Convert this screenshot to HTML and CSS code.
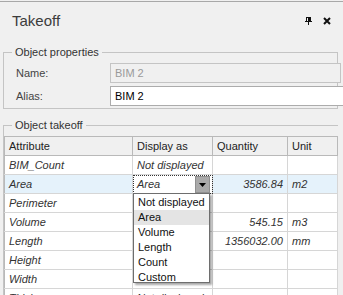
FILE: index.html
```html
<!DOCTYPE html>
<html>
<head>
<meta charset="utf-8">
<link rel="stylesheet" href="styles.css">
</head>
<body>
<div class="panel">
  <div class="titlebar">
    <span class="title">Takeoff</span>
    <span class="tools">
      <svg class="pin" width="7" height="8" viewBox="0 0 7 8"><path d="M1 0h5v4h1v1h-3v3h-1v-3h-3v-1h1z" fill="#111"/><rect x="2" y="1" width="1" height="3" fill="#f0f0f0"/></svg>
      <svg class="close" width="8" height="8" viewBox="0 0 8 8"><path d="M1 1L7 7M7 1L1 7" stroke="#111" stroke-width="2"/></svg>
    </span>
  </div>
  <fieldset class="group props">
    <legend>Object properties</legend>
    <div class="field"><label>Name:</label><div class="input disabled">BIM 2</div></div>
    <div class="field"><label>Alias:</label><div class="input wide">BIM 2</div></div>
  </fieldset>
  <fieldset class="group takeoff">
    <legend>Object takeoff</legend>
    <div class="gridwrap">
      <table class="grid">
        <colgroup><col class="c1"><col class="c2"><col class="c3"><col class="c4"></colgroup>
        <thead><tr><th>Attribute</th><th>Display as</th><th>Quantity</th><th>Unit</th></tr></thead>
        <tbody>
          <tr><td>BIM_Count</td><td>Not displayed</td><td></td><td></td></tr>
          <tr class="sel"><td>Area</td><td class="editor"><span>Area</span><span class="btn"><svg width="7" height="4" viewBox="0 0 7 4"><path d="M0 0h7L3.5 4z" fill="#000"/></svg></span></td><td class="num">3586.84</td><td>m2</td></tr>
          <tr><td>Perimeter</td><td></td><td></td><td></td></tr>
          <tr><td>Volume</td><td></td><td class="num">545.15</td><td>m3</td></tr>
          <tr><td>Length</td><td></td><td class="num">1356032.00</td><td>mm</td></tr>
          <tr><td>Height</td><td></td><td></td><td></td></tr>
          <tr><td>Width</td><td></td><td></td><td></td></tr>
          <tr><td>Thickness</td><td>Not displayed</td><td></td><td></td></tr>
        </tbody>
      </table>
      <ul class="dropdown">
        <li>Not displayed</li>
        <li class="hot">Area</li>
        <li>Volume</li>
        <li>Length</li>
        <li>Count</li>
        <li>Custom</li>
      </ul>
    </div>
  </fieldset>
</div>
</body>
</html>
```
FILE: styles.css
```css
html, body {
  margin: 0;
  padding: 0;
  background: #f0f0f0;
  overflow: hidden;
  width: 343px;
  height: 295px;
}
body {
  font-family: "Liberation Sans", Arial, sans-serif;
  font-size: 11px;
  color: #000;
}
.panel {
  margin-top: 1px;
  border-top: 1px solid #a8a8a8;
  height: 293px;
  overflow: hidden;
}
.titlebar {
  display: flex;
  align-items: center;
  justify-content: space-between;
  height: 36px;
  padding: 0 12px 0 12px;
}
.title {
  font-size: 15px;
  color: #3c3c3c;
}
.tools {
  display: flex;
  align-items: center;
  gap: 11px;
  padding-top: 2px;
}
.group {
  margin: 0 5px 0 3px;
  padding: 0;
  border: 1px solid #c4c4c4;
  min-width: 0;
}
.group legend {
  padding: 0 3px;
  margin-left: 8px;
  color: #333;
  line-height: 14px;
  height: 14px;
}
.props {
  margin-top: 7px;
  padding-top: 4px;
  padding-bottom: 2px;
  display: flex;
  flex-direction: column;
  gap: 3px;
}
.field {
  display: flex;
  align-items: center;
  height: 20px;
}
.field label {
  width: 94px;
  padding-left: 12px;
  color: #444;
  flex: none;
}
.input {
  box-sizing: border-box;
  height: 20px;
  flex: none;
  width: 231px;
  border: 1px solid #acacac;
  background: #fff;
  padding-left: 4px;
  line-height: 18px;
}
.input.disabled {
  background: #f0f0f0;
  color: #9a9a9a;
  border-color: #c4c4c4;
}
.input.wide {
  width: 240px;
}
.takeoff {
  margin-top: 9px;
  margin-left: 3px;
  height: 200px;
  border-right: none;
  padding-top: 4px;
}
.gridwrap {
  position: relative;
}
.grid {
  border-collapse: collapse;
  table-layout: fixed;
  width: 333px;
}
.c1 { width: 128px; }
.c2 { width: 80px; }
.c3 { width: 75px; }
.c4 { width: 50px; }
.grid th {
  height: 18px;
  padding: 0 0 0 4px;
  text-align: left;
  font-weight: normal;
  color: #222;
  border: 1px solid #b9b9b9;
  background: #f0f0f0;
}
.grid td {
  height: 18px;
  padding: 0 4px;
  font-style: italic;
  color: #333;
  border: 1px solid #d6d6d6;
  background: #fff;
  white-space: nowrap;
  overflow: hidden;
}
.grid td:first-child { border-left-color: #b9b9b9; }
.grid td.num { text-align: right; }
.grid tr.sel td { background: #e5f2fb; }
.grid tr.sel td.editor {
  background: #fff;
  outline: 1px dotted #333;
  outline-offset: -1px;
  padding-right: 2px;
}
.editor {
  position: relative;
}
.editor .btn {
  position: absolute;
  right: 2px;
  top: 1px;
  width: 15px;
  height: 17px;
  box-sizing: border-box;
  background: #a9a9a9;
  border: 1px solid #8f8f8f;
  display: flex;
  align-items: center;
  justify-content: center;
}
.dropdown {
  position: absolute;
  left: 129px;
  top: 57px;
  width: 75px;
  height: 87px;
  overflow: hidden;
  margin: 0;
  padding: 1px 0 0 0;
  list-style: none;
  background: #fff;
  border: 1px solid #6e6e6e;
  box-shadow: 2px 2px 2px rgba(0,0,0,0.35);
}
.dropdown li {
  height: 15px;
  line-height: 14px;
  padding-left: 4px;
  color: #111;
  white-space: nowrap;
}
.dropdown li.hot {
  background: #e4e4e4;
}
```
